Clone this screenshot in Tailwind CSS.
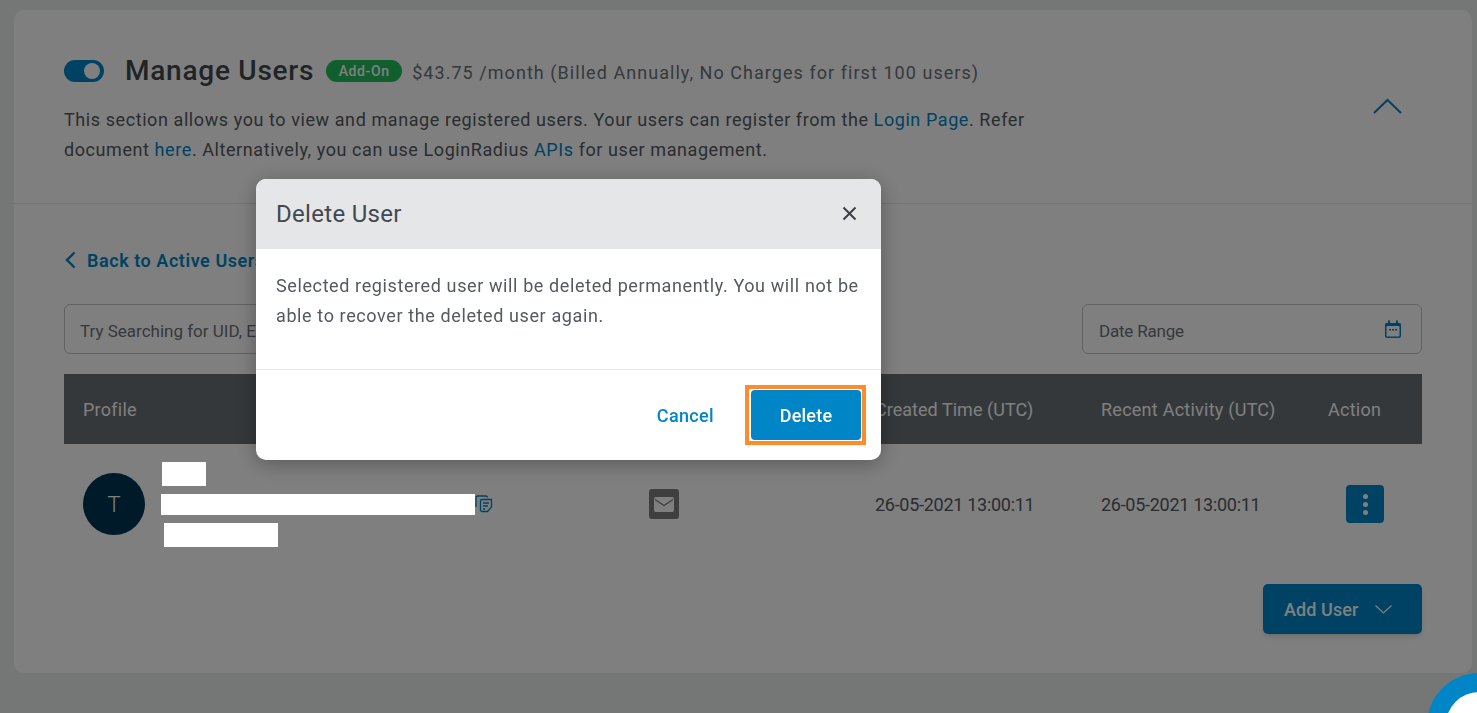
<!DOCTYPE html>
<html>
<head>
    <meta charset="utf-8">
    <title>Manage Users</title>
    <script src="https://cdn.jsdelivr.net/npm/@tailwindcss/browser@4"></script>
</head>
<body class="bg-[#ebeeec] h-[713px] overflow-hidden font-['Roboto',sans-serif] text-[#545a60]">
    <div class="pt-[10px] pl-[14px] pr-[5px]">
        <div class="bg-white rounded-[10px] h-[663px]">
            <!-- section header -->
            <div class="relative pt-[40px] pb-[38px] px-[50px] border-b border-[#e6e6e6]">
                <div class="flex items-center h-[42px]">
                    <span class="relative w-[40px] h-[22px] rounded-full bg-[#0085c6] shrink-0">
                        <span class="absolute right-[4px] top-[3px] w-[16px] h-[16px] rounded-full bg-white"></span>
                    </span>
                    <h2 class="ml-[21px] text-[28px] font-medium text-[#43484f] tracking-[0.75px]">Manage Users</h2>
                    <span class="ml-[12px] w-[76px] h-[22px] flex items-center justify-center rounded-full bg-[#22bc5c] text-white text-[14px] font-medium tracking-[0.6px]">Add-On</span>
                    <span class="ml-[10px] pt-[3px] text-[18px] text-[#6c7278] tracking-[1.05px]">$43.75 /month (Billed Annually, No Charges for first 100 users)</span>
                </div>
                <p class="mt-[13px] w-[980px] text-[18px] leading-[30px] tracking-[0.58px]">This section allows you to view and manage registered users. Your users can register from the <a href="#" class="text-[#0085c6]">Login Page</a>. Refer document <a href="#" class="text-[#0085c6]">here</a>. Alternatively, you can use LoginRadius <a href="#" class="text-[#0085c6]">APIs</a> for user management.</p>
                <svg class="absolute right-[70px] top-[88px]" width="29" height="16" viewBox="0 0 29 16" fill="none" stroke="#0085c6" stroke-width="2"><path d="M1 15 14.5 2 28 15"/></svg>
            </div>
            <div class="px-[50px]">
                <a href="#" class="mt-[41px] h-[30px] flex items-center text-[18px] font-semibold text-[#0085c6] tracking-[0.55px]">
                    <svg class="ml-[1px] mr-[11px]" width="11" height="18" viewBox="0 0 11 18" fill="none" stroke="#0085c6" stroke-width="2.4"><path d="M9.5 1.5 2 9l7.5 7.5"/></svg>
                    Back to Active Users
                </a>
                <div class="mt-[29px] flex justify-between">
                    <div class="w-[400px] h-[50px] border border-[#c4c4c4] rounded-[6px] pl-[15px] pt-[6px] flex items-center text-[17px] text-[#6c7278]">Try Searching for UID, Email</div>
                    <div class="w-[340px] h-[50px] border border-[#c4c4c4] rounded-[6px] pl-[16px] pr-[20px] flex items-center justify-between text-[17px] text-[#6c7278] tracking-[-0.2px]">
                        <span class="pt-[6px]">Date Range</span>
                        <svg width="16" height="18" viewBox="0 0 16 18" fill="none"><path d="M3 .5h2V3h6V.5h2V3h1.5A1.5 1.5 0 0 1 16 4.500V16a2 2 0 0 1-2 2H2a2 2 0 0 1-2-2V4.500A1.500 1.500 0 0 1 1.500 3H3z" fill="#0085c6"/><rect x="1.500" y="6" width="13" height="10.500" rx="1" fill="#fff"/><path d="M4 9h2v1.500H4zM7 9h2v1.500H7zM10 9h2v1.500h-2z" fill="#0085c6"/></svg>
                    </div>
                </div>
                <!-- table -->
                <div class="mt-[20px] h-[70px] bg-[#6a7075] pl-[19px] grid grid-cols-[566px_226px_226px_227px_1fr] items-center text-[18px] text-white tracking-[0.25px]">
                    <div>Profile</div>
                    <div>Status</div>
                    <div class="tracking-[0.03px]">Created Time (UTC)</div>
                    <div>Recent Activity (UTC)</div>
                    <div>Action</div>
                </div>
                <div class="h-[120px] pl-[19px] grid grid-cols-[566px_226px_226px_227px_1fr] items-center text-[18px]">
                    <div class="flex items-center">
                        <div class="w-[62px] h-[62px] rounded-full bg-[#003554] flex items-center justify-center text-[22px] font-light text-white">T</div>
                        <svg class="ml-[330px]" width="18" height="18" viewBox="0 0 18 18" fill="none" stroke="#0085c6" stroke-width="1.300"><path d="M1 12V2.500A1.500 1.500 0 0 1 2.500 1h8.500a1.500 1.500 0 0 1 1.500 1.500"/><path d="M5.500 16V6a1.500 1.500 0 0 1 1.500-1.500h9.500V12l-4 4.500H7A1.500 1.500 0 0 1 5.500 15"/><path d="M8 8h6M8 11h5M8 14h2"/></svg>
                    </div>
                    <div>
                        <div class="w-[30px] h-[30px] rounded-[3px] bg-[#7f7f7f] flex items-center justify-center">
                            <svg width="20" height="15" viewBox="0 0 20 15"><rect width="20" height="15" rx="2" fill="#fff"/><path d="M1 2.500 10 8.500l9-6" fill="none" stroke="#7f7f7f" stroke-width="1.400"/></svg>
                        </div>
                    </div>
                    <div class="tracking-[-0.28px]">26-05-2021 13:00:11</div>
                    <div class="tracking-[-0.28px]">26-05-2021 13:00:11</div>
                    <div>
                        <div class="ml-[18px] w-[38px] h-[38px] rounded-[4px] bg-[#0085c6] flex flex-col items-center justify-center gap-[3px]">
                            <span class="w-[5px] h-[5px] rounded-full bg-white"></span>
                            <span class="w-[5px] h-[5px] rounded-full bg-white"></span>
                            <span class="w-[5px] h-[5px] rounded-full bg-white"></span>
                        </div>
                    </div>
                </div>
                <div class="mt-[20px] flex justify-end">
                    <button class="w-[159px] h-[50px] rounded-[5px] bg-[#0085c6] text-white text-[18px] font-medium flex items-center pl-[21px] shadow-md tracking-[0.1px]">
                        Add User
                        <svg class="ml-[16px]" width="17" height="9" viewBox="0 0 17 9" fill="none" stroke="#fff" stroke-width="1.200"><path d="M.5.5l8 7.500 8-7.500"/></svg>
                    </button>
                </div>
            </div>
        </div>
    </div>

    <div class="fixed inset-0 bg-black/50"></div>

    <!-- masked user details -->
    <div class="fixed left-[162px] top-[462px] w-[44px] h-[24px] bg-white"></div>
    <div class="fixed left-[161px] top-[494px] w-[314px] h-[21px] bg-white"></div>
    <div class="fixed left-[164px] top-[523px] w-[114px] h-[24px] bg-white"></div>

    <!-- modal -->
    <div class="fixed left-[256px] top-[179px] w-[625px] h-[281px] rounded-[10px] bg-white overflow-hidden shadow-[0_4px_20px_rgba(0,0,0,0.3)] flex flex-col">
        <div class="h-[70px] bg-[#e4e6e8] pl-[20px] pr-[24px] flex items-center justify-between">
            <h3 class="text-[24px] text-[#43484f] tracking-[0.3px]">Delete User</h3>
            <svg class="mb-[2px]" width="15" height="15" viewBox="0 0 15 15" fill="none" stroke="#3a3f44" stroke-width="2"><path d="M1.500 1.500l12 12M13.500 1.500l-12 12"/></svg>
        </div>
        <p class="h-[121px] border-b border-[#e4e6e8] px-[20px] pt-[22px] text-[18px] leading-[30px] text-[#545a60] tracking-[0.61px]">Selected registered user will be deleted permanently. You will not be able to recover the deleted user again.</p>
        <div class="flex-1 flex items-center justify-end pr-[15px]">
            <a href="#" class="mr-[31px] text-[18px] font-medium text-[#0085c6] tracking-[0.35px]">Cancel</a>
            <div class="border-4 border-[#ff8b2b] p-px pl-[2px]">
                <button class="w-[110px] h-[50px] rounded-[4px] bg-[#0085c6] text-white text-[18px] font-medium tracking-[0.2px]">Delete</button>
            </div>
        </div>
    </div>

    <!-- chat launcher -->
    <div class="fixed left-[1427px] top-[673px] w-[104px] h-[104px] rounded-full bg-[#0085c6] flex items-center justify-center">
        <div class="w-[66px] h-[66px] rounded-full bg-white"></div>
    </div>
</body>
</html>
